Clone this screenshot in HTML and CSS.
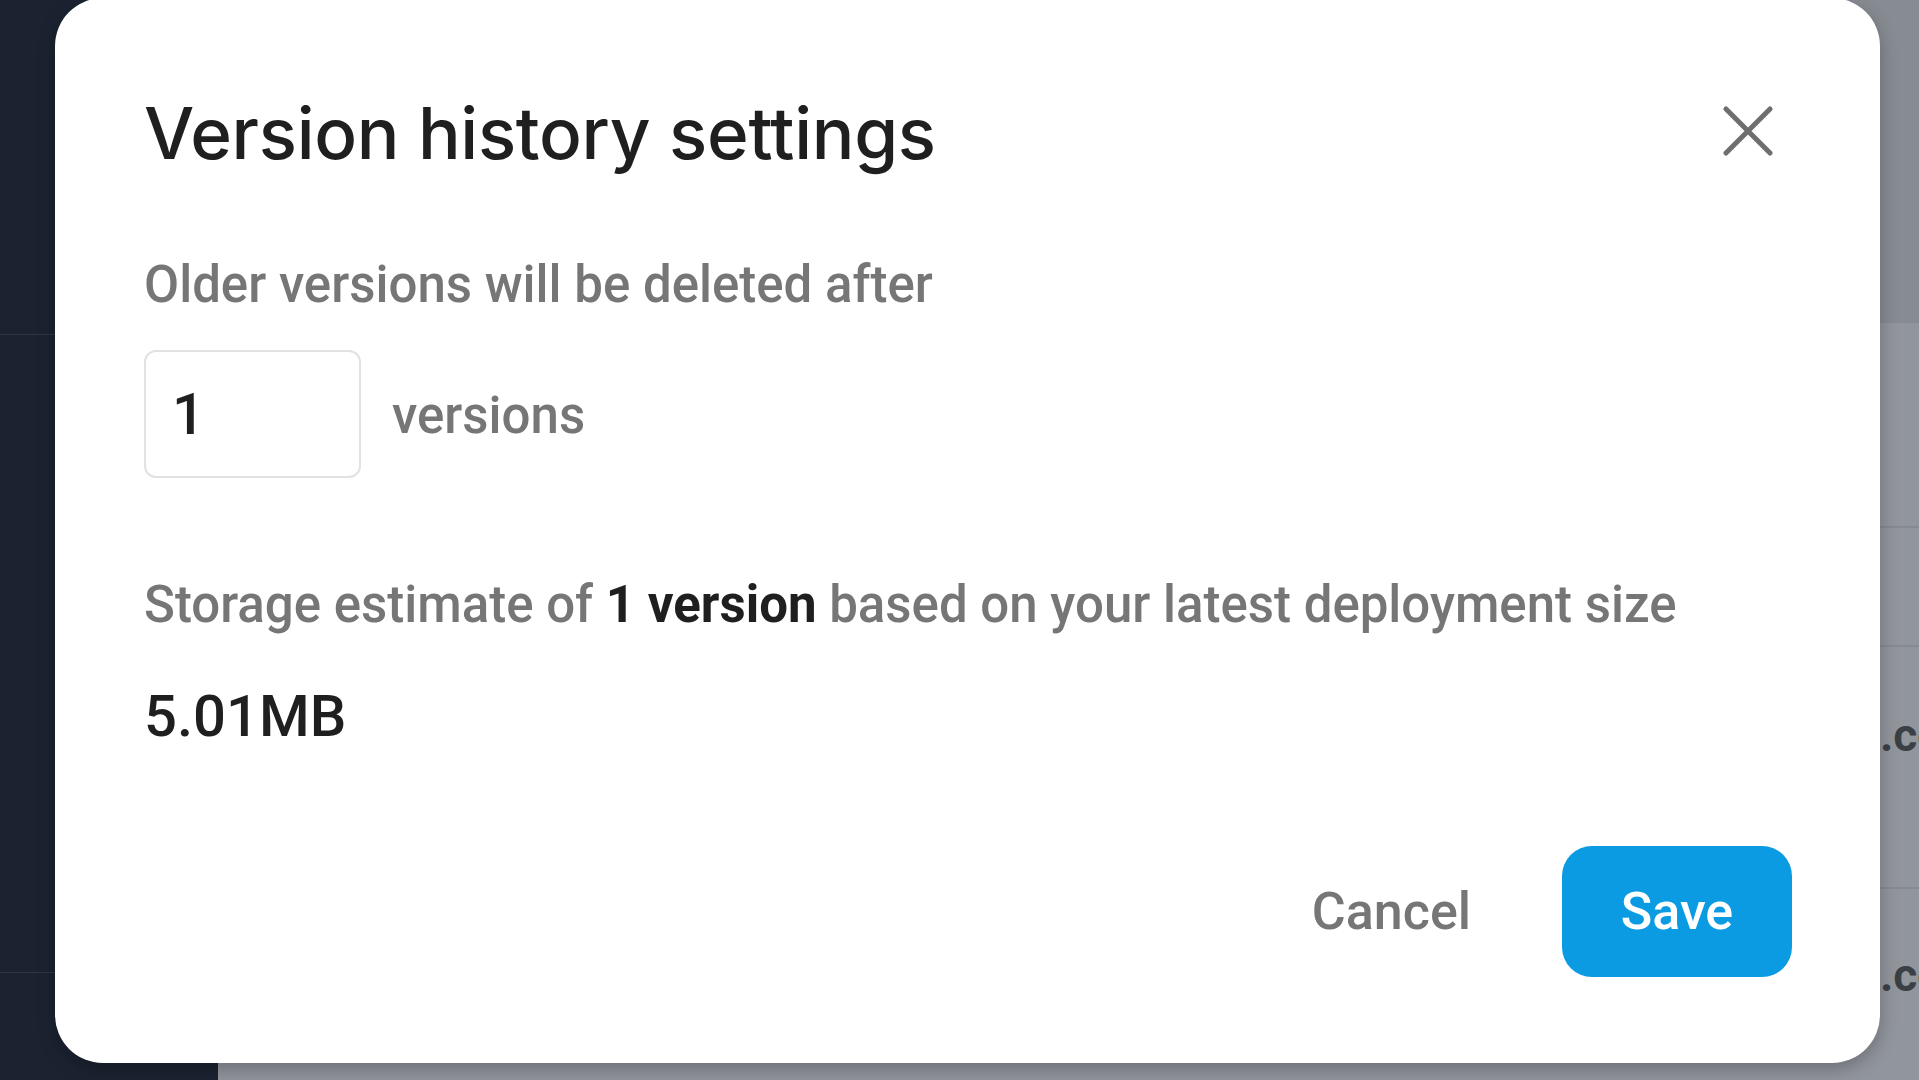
FILE: index.html
```html
<!DOCTYPE html>
<html lang="en">
<head>
<meta charset="utf-8">
<title>Version history settings</title>
<link rel="stylesheet" href="styles.css">
</head>
<body>
<div class="app">
  <aside class="sidebar">
    <div class="side-top"></div>
    <div class="side-mid"></div>
    <div class="side-bottom"></div>
  </aside>
  <main class="main">
    <div class="main-head"></div>
    <div class="row row-a"><span class="cell-l"></span><span class="cell-r"></span></div>
    <div class="row row-b"><span class="cell-l"></span><span class="cell-r"></span></div>
    <div class="row row-c"><span class="cell-l">my-project</span><span class="cell-r">.com</span></div>
    <div class="row row-d"><span class="cell-l">my-project-staging</span><span class="cell-r">.com</span></div>
  </main>
</div>

<div class="dialog" role="dialog" aria-labelledby="dlg-title">
  <div class="dialog-head">
    <h1 id="dlg-title" class="dialog-title">Version history settings</h1>
    <button class="close-btn" aria-label="Close">
      <svg width="50" height="50" viewBox="0 0 50 50" fill="none" stroke="#6e6e6e" stroke-width="5" stroke-linecap="round">
        <path d="M3 3 L47 47 M47 3 L3 47"/>
      </svg>
    </button>
  </div>
  <p class="label">Older versions will be deleted after</p>
  <div class="count-row">
    <div class="count-box">1</div>
    <span class="count-unit">versions</span>
  </div>
  <p class="estimate">Storage estimate of <strong>1 version</strong> based on your latest deployment size</p>
  <div class="size">5.01MB</div>
  <div class="actions">
    <button class="btn-cancel">Cancel</button>
    <button class="btn-save">Save</button>
  </div>
</div>
</body>
</html>
```

FILE: styles.css
```css
html, body {
  margin: 0;
  padding: 0;
}
body {
  width: 1919px;
  height: 1080px;
  overflow: hidden;
  position: relative;
  font-family: Roboto, "Liberation Sans", sans-serif;
  background: #8f939a;
}

/* background app (dimmed) */
.app {
  display: flex;
  height: 1080px;
}
.sidebar {
  width: 218px;
  flex: none;
  background: #1b2331;
  display: flex;
  flex-direction: column;
}
.side-top {
  height: 334px;
  border-bottom: 1px solid #2e3645;
}
.side-mid {
  height: 637px;
  border-bottom: 1px solid #2e3645;
}
.side-bottom {
  flex: 1;
}
.main {
  flex: 1;
  display: flex;
  flex-direction: column;
  background: #91959c;
}
.main-head {
  height: 321px;
  background: #878b92;
}
.row {
  display: grid;
  grid-template-columns: 1662px 1fr;
  border-top: 2px solid #868a91;
  box-sizing: border-box;
  font-weight: 700;
  font-size: 46px;
  line-height: 46px;
  color: #3b3f46;
  white-space: nowrap;
}
.row-a { height: 205px; }
.row-b { height: 119px; }
.row-c { height: 242px; padding-top: 65px; }
.row-d { flex: 1; padding-top: 63px; }
.cell-l {
  text-align: right;
  overflow: hidden;
}
.cell-r {
  overflow: hidden;
}

/* dialog */
.dialog {
  position: absolute;
  left: 55px;
  top: -2px;
  width: 1825px;
  height: 1065px;
  box-sizing: border-box;
  padding: 93px 88px 0 89px;
  background: #ffffff;
  border-radius: 48px;
  box-shadow: 0 6px 18px rgba(0, 0, 0, 0.25);
}
.dialog-head {
  display: flex;
  align-items: center;
  justify-content: space-between;
  height: 84px;
}
.dialog-title {
  margin: 0;
  font-family: Inter, "Open Sans", sans-serif;
  font-weight: 500;
  font-size: 71px;
  line-height: 84px;
  letter-spacing: -0.3px;
  color: #1f1f1f;
}
.close-btn {
  width: 88px;
  height: 88px;
  margin-top: -5px;
  padding: 0;
  border: 0;
  background: transparent;
  display: flex;
  align-items: center;
  justify-content: center;
}
.label {
  margin: 80px 0 0;
  font-size: 51px;
  line-height: 60px;
  font-weight: 500;
  color: #767676;
}
.count-row {
  margin-top: 35px;
  display: flex;
  align-items: center;
  gap: 31px;
}
.count-box {
  width: 217px;
  height: 128px;
  box-sizing: border-box;
  border: 2px solid #e2e2e2;
  border-radius: 12px;
  padding-left: 26px;
  display: flex;
  align-items: center;
  font-size: 58px;
  font-weight: 500;
  color: #1f1f1f;
}
.count-unit {
  font-size: 51px;
  line-height: 60px;
  font-weight: 500;
  color: #767676;
  margin-top: 3px;
}
.estimate {
  margin: 97px 0 0;
  font-size: 51px;
  line-height: 60px;
  font-weight: 500;
  color: #767676;
  white-space: nowrap;
}
.estimate strong {
  font-weight: 700;
  color: #1f1f1f;
}
.size {
  margin-top: 47px;
  font-size: 58px;
  line-height: 68px;
  font-weight: 500;
  color: #1f1f1f;
}
.actions {
  margin-top: 96px;
  display: flex;
  justify-content: flex-end;
  align-items: center;
  gap: 91px;
}
.btn-cancel {
  font-family: Roboto, "Liberation Sans", sans-serif;
  font-size: 52px;
  font-weight: 500;
  color: #767676;
  background: transparent;
  border: 0;
  padding: 0;
  height: 131px;
}
.btn-save {
  width: 230px;
  height: 131px;
  border: 0;
  border-radius: 30px;
  background: #0b9be3;
  color: #ffffff;
  font-family: Roboto, "Liberation Sans", sans-serif;
  font-size: 52px;
  font-weight: 500;
}
```
